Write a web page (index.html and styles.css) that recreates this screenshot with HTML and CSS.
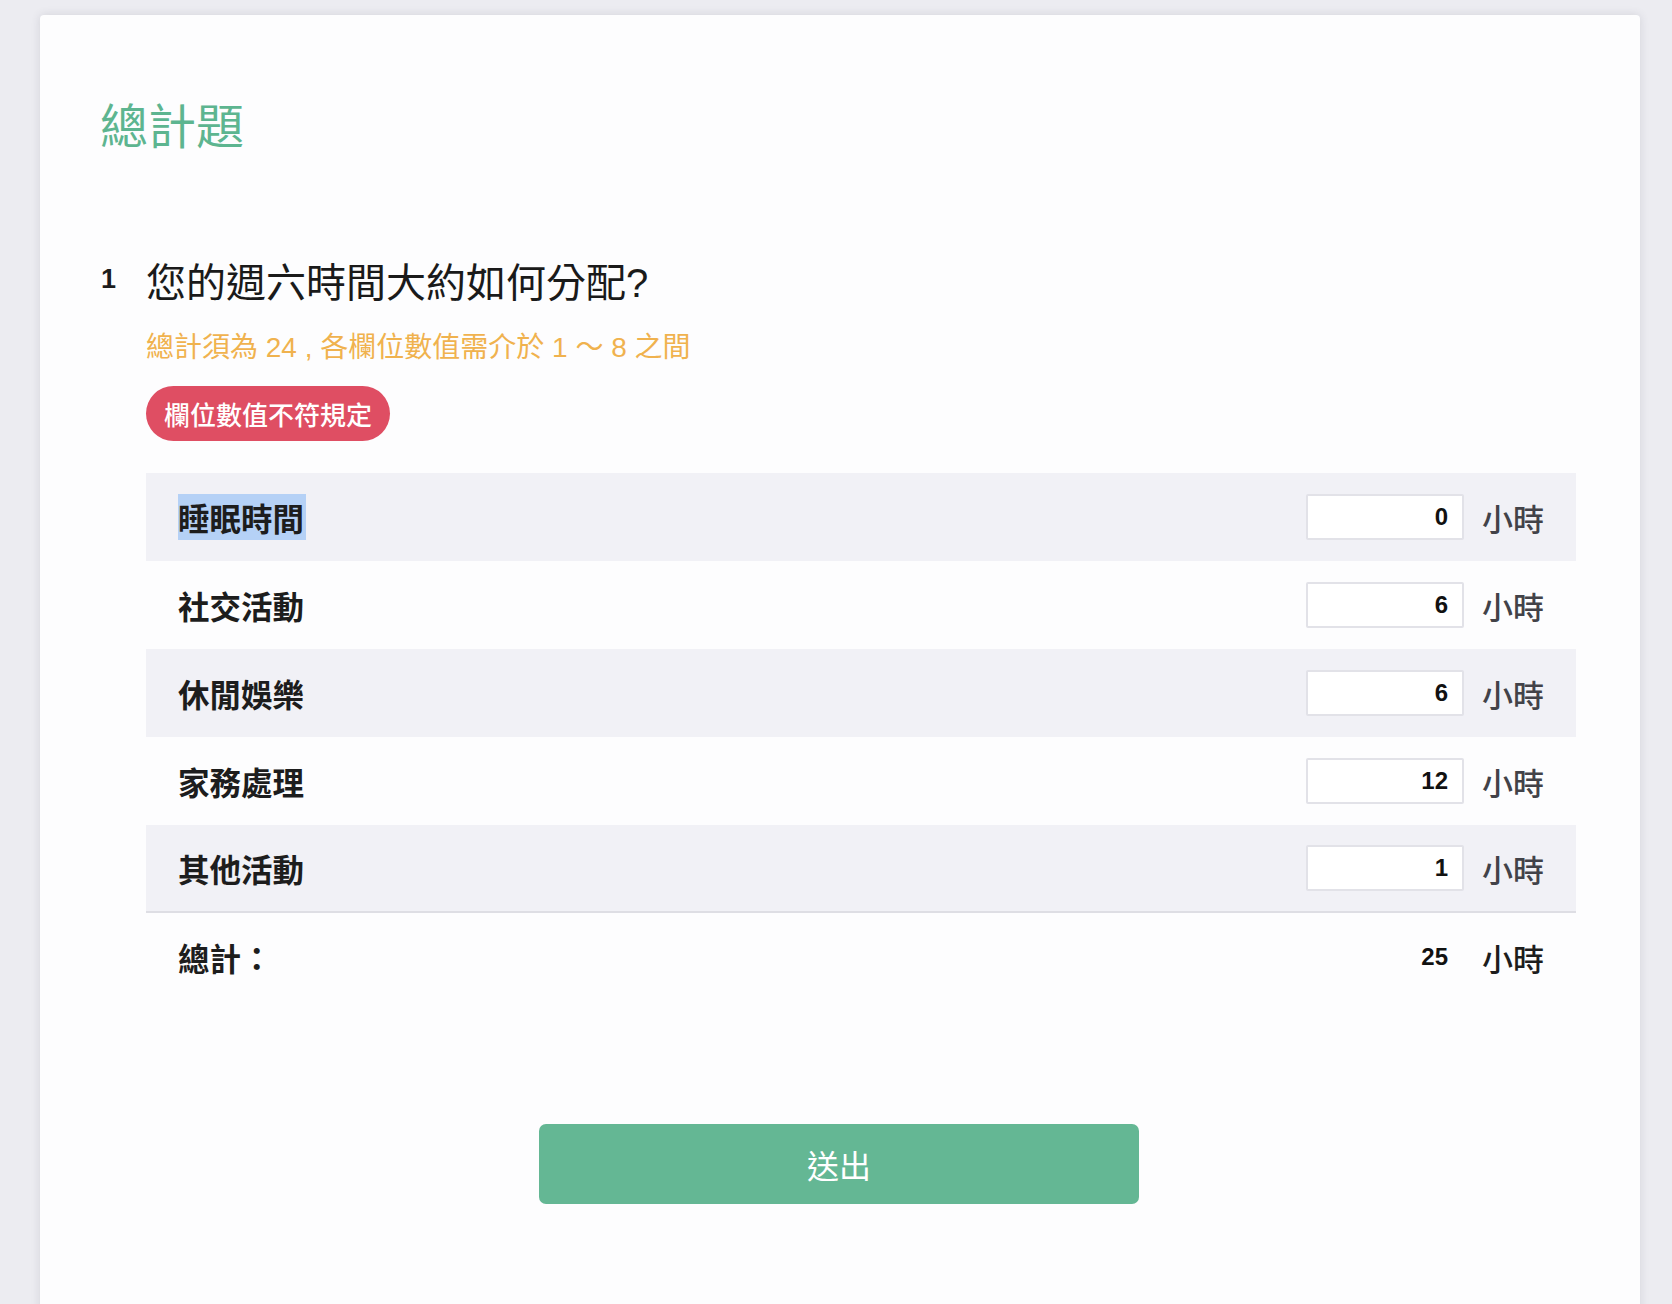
FILE: index.html
```html
<!DOCTYPE html>
<html lang="zh-Hant">
<head>
<meta charset="utf-8">
<title>總計題</title>
<link rel="stylesheet" href="styles.css">
</head>
<body>
<main class="card">
  <h1 class="page-title">總計題</h1>

  <section class="question">
    <div class="q-head">
      <span class="q-num">1</span>
      <h2 class="q-text">您的週六時間大約如何分配?</h2>
    </div>
    <div class="q-body">
      <p class="q-hint">總計須為 24 , 各欄位數值需介於 1 ～ 8 之間</p>
      <span class="q-error">欄位數值不符規定</span>

      <div class="sum-table">
        <div class="sum-row stripe">
          <span class="sum-label"><span class="selected">睡眠時間</span></span>
          <input class="sum-input" type="text" value="0">
          <span class="sum-unit">小時</span>
        </div>
        <div class="sum-row">
          <span class="sum-label">社交活動</span>
          <input class="sum-input" type="text" value="6">
          <span class="sum-unit">小時</span>
        </div>
        <div class="sum-row stripe">
          <span class="sum-label">休閒娛樂</span>
          <input class="sum-input" type="text" value="6">
          <span class="sum-unit">小時</span>
        </div>
        <div class="sum-row">
          <span class="sum-label">家務處理</span>
          <input class="sum-input" type="text" value="12">
          <span class="sum-unit">小時</span>
        </div>
        <div class="sum-row stripe last">
          <span class="sum-label">其他活動</span>
          <input class="sum-input" type="text" value="1">
          <span class="sum-unit">小時</span>
        </div>
        <div class="sum-row total">
          <span class="sum-label">總計：</span>
          <span class="sum-value">25</span>
          <span class="sum-unit">小時</span>
        </div>
      </div>
    </div>
  </section>

  <div class="actions">
    <button class="submit" type="button">送出</button>
  </div>
</main>
</body>
</html>
```

FILE: styles.css
```css
* { box-sizing: border-box; }

html, body {
  margin: 0;
  padding: 0;
  background: #ececf1;
  font-family: "Noto Sans CJK TC", "Noto Sans", sans-serif;
  color: #1f1f1f;
}

body {
  padding: 15px 0 0 40px;
  height: 1304px;
  overflow: hidden;
}

.card {
  width: 1600px;
  background: #fdfdfe;
  border-radius: 4px;
  box-shadow: 0 0 10px rgba(60, 60, 80, 0.14);
  padding: 77px 64px 160px 60px;
}

.page-title {
  margin: 0;
  font-size: 48px;
  line-height: 62px;
  font-weight: 400;
  color: #5db590;
}

.question {
  margin-top: 99px;
}

.q-head {
  display: flex;
  align-items: center;
}

.q-num {
  width: 46px;
  flex: none;
  font-family: "Liberation Sans", Arial, sans-serif;
  font-weight: 700;
  font-size: 27px;
  color: #1c1c1c;
  padding-left: 1px;
  margin-top: -8px;
}

.q-text {
  margin: 0;
  font-family: "Liberation Sans", "Noto Sans CJK TC", sans-serif;
  font-size: 40px;
  line-height: 60px;
  font-weight: 400;
  color: #1a1a1a;
}

.q-body {
  padding-left: 46px;
}

.q-hint {
  margin: 15px 0 0;
  font-family: "Liberation Sans", "Noto Sans CJK TC", sans-serif;
  font-size: 28px;
  line-height: 40px;
  color: #f0b24e;
}

.q-error {
  display: inline-block;
  margin-top: 18px;
  height: 55px;
  line-height: 55px;
  padding: 0 18px;
  border-radius: 28px;
  background: #df4e63;
  color: #ffffff;
  font-size: 26px;
  font-weight: 500;
}

.sum-table {
  margin-top: 32px;
  width: 1430px;
}

.sum-row {
  display: flex;
  align-items: center;
  height: 88px;
  padding: 0 32px;
}

.sum-row.stripe {
  background: #f1f1f6;
}

.sum-row.last {
  border-bottom: 2px solid #dedee4;
}

.sum-label {
  flex: 1;
  font-size: 31.5px;
  font-weight: 700;
  color: #1d1d1d;
}

.selected {
  background: #b5d1f6;
  display: inline-block;
  line-height: 46px;
  padding-right: 2px;
}

.sum-input {
  width: 158px;
  height: 46px;
  border: 2px solid #e2e2e8;
  border-radius: 2px;
  background: #ffffff;
  text-align: right;
  padding: 0 14px 0 8px;
  font-family: "Liberation Sans", Arial, sans-serif;
  font-weight: 700;
  font-size: 24px;
  color: #111;
  outline: none;
}

.sum-value {
  width: 158px;
  text-align: right;
  padding-right: 16px;
  font-family: "Liberation Sans", Arial, sans-serif;
  font-weight: 700;
  font-size: 24px;
  color: #111;
}

.sum-unit {
  margin-left: 18px;
  font-size: 31px;
  font-weight: 500;
  color: #424248;
}

.total .sum-unit {
  color: #1d1d1d;
}

.actions {
  display: flex;
  justify-content: center;
  margin-top: 123px;
  padding-left: 2px;
}

.submit {
  width: 600px;
  height: 80px;
  border: none;
  border-radius: 7px;
  background: #64b794;
  color: #ffffff;
  font-family: "Noto Sans CJK TC", sans-serif;
  font-size: 32px;
  cursor: pointer;
}
```
